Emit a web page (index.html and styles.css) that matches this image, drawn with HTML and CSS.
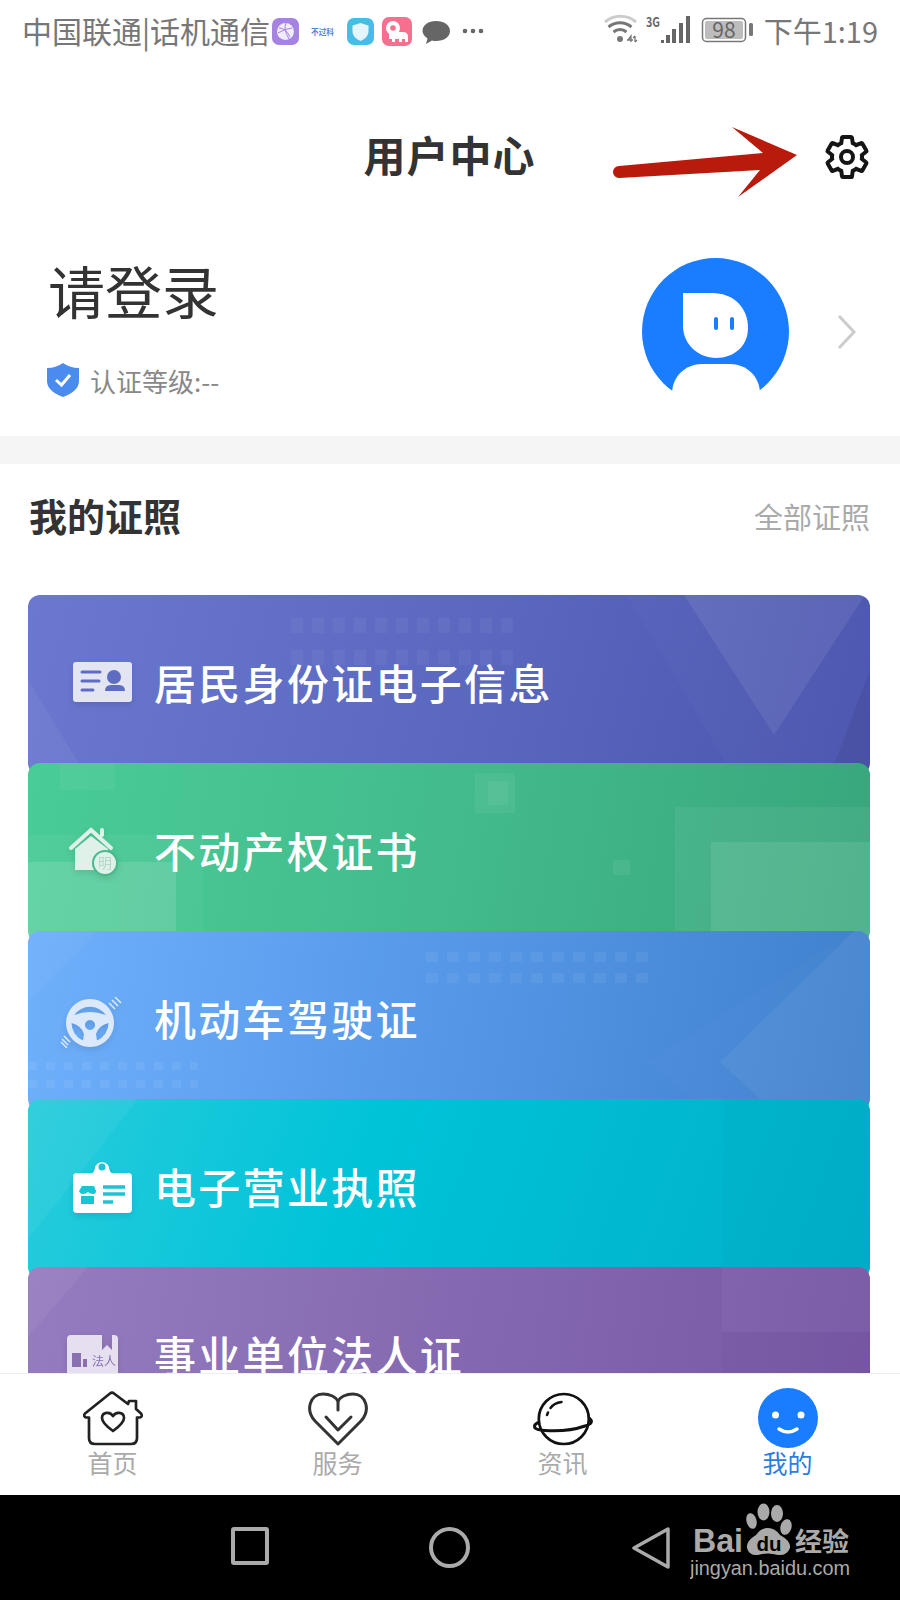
FILE: index.html
```html
<!DOCTYPE html>
<html lang="zh-CN">

<head>
  <meta charset="UTF-8">
  <meta name="viewport" content="width=device-width, initial-scale=1.0">
  <title>用户中心</title>
  <link rel="stylesheet" href="styles.css">
</head>

<body>
  <div class="page">

    <!-- 状态栏 -->
    <div class="status-bar">
      <span class="status-text">中国联通|话机通信</span>
      <svg class="status-notify" width="214" height="32" viewBox="0 0 214 32">
        <rect x="1" y="2" width="27" height="27" rx="7" fill="#a583e0"/>
        <circle cx="14.5" cy="15.5" r="8.5" fill="#f1ecfb"/>
        <path d="M8 12q7 0 11 9M15 7q-3 6 3 16M7 17q6-4 14-5" fill="none" stroke="#a583e0" stroke-width="1"/>
        <text class="tiny-text" x="40" y="18.5" textLength="23" lengthAdjust="spacingAndGlyphs">不过科</text>
        <rect x="76" y="2" width="27" height="27" rx="7" fill="#45bde6"/>
        <path d="M89.5 7l8 2.500v6q0 6-8 9.500q-8-3.500-8-9.500v-6z" fill="#e4f5fb"/>
        <rect x="111" y="1" width="30" height="29" rx="7" fill="#f5708f"/>
        <circle cx="122" cy="12" r="7" fill="#fff"/>
        <path d="M118 16H132Q137 16 137 21V26H134V23H131V26H128V23H124V26H121V23H118Z" fill="#fff"/>
        <circle cx="122" cy="12" r="2.800" fill="#f5708f"/>
        <path d="M165 5c8 0 14 4 14 10s-6 10-14 10c-1 0-3 0-4-.5l-6 3.500 1.500-5.500c-3-2-5-5-5-7.500 0-6 6-10 13.500-10z" fill="#666"/>
        <circle cx="194" cy="15" r="2.300" fill="#666"/>
        <circle cx="202" cy="15" r="2.300" fill="#666"/>
        <circle cx="210" cy="15" r="2.300" fill="#666"/>
      </svg>
      <div class="status-right">
        <svg width="150" height="32" viewBox="0 0 150 32">
          <path d="M1 8a24 24 0 0 1 31 0" fill="none" stroke="#ccc" stroke-width="3"/>
          <path d="M4.500 13a18 18 0 0 1 23 0" fill="none" stroke="#777" stroke-width="3"/>
          <path d="M9.500 18a10 10 0 0 1 13 0" fill="none" stroke="#777" stroke-width="3"/>
          <circle cx="16" cy="25" r="3" fill="#777"/>
          <path d="M24 26l3-4v6M23 26h6M31 22v6M33 26l-2 2M29 24l2-2" fill="none" stroke="#777" stroke-width="1.300"/>
          <text class="net-text" x="42" y="13" textLength="14" lengthAdjust="spacingAndGlyphs">3G</text>
          <rect x="57" y="26" width="3" height="3" fill="#666"/>
          <rect x="62" y="21" width="4" height="8" fill="#666"/>
          <rect x="68" y="15" width="4" height="14" fill="#666"/>
          <rect x="75" y="9" width="4" height="20" fill="#666"/>
          <rect x="82" y="2" width="4" height="27" fill="#666"/>
          <rect x="98.500" y="4.500" width="43" height="23" rx="4" fill="none" stroke="#777" stroke-width="1.500"/>
          <rect x="101" y="7" width="38" height="18" rx="2" fill="#bdbdbd"/>
          <text class="battery-text" x="120" y="24" text-anchor="middle">98</text>
          <rect x="145" y="9" width="4" height="13" rx="1.500" fill="#777"/>
        </svg>
        <span class="status-time">下午1:19</span>
      </div>
    </div>

    <!-- 标题 -->
    <div class="top-bar">
      <h1 class="top-title">用户中心</h1>
      <svg class="gear" width="48" height="48" viewBox="0 0 24 24">
        <path d="M19.430 12.980c.04-.32.07-.64.07-.98 0-.34-.03-.66-.07-.98l2.110-1.650c.19-.15.24-.42.12-.64l-2-3.460c-.12-.22-.39-.3-.61-.22l-2.490 1c-.52-.4-1.080-.73-1.690-.98l-.38-2.650C14.460 2.180 14.250 2 14 2h-4c-.25 0-.46.18-.49.42l-.38 2.650c-.61.25-1.170.59-1.690.98l-2.490-1c-.23-.09-.49 0-.61.22l-2 3.460c-.13.22-.07.49.12.64l2.110 1.650c-.04.32-.07.65-.07.98 0 .33.03.66.07.98l-2.110 1.650c-.19.15-.24.42-.12.64l2 3.460c.12.22.39.3.61.22l2.490-1c.52.4 1.080.73 1.690.98l.38 2.650c.03.24.24.42.49.42h4c.25 0 .46-.18.49-.42l.38-2.650c.61-.25 1.170-.59 1.690-.98l2.490 1c.23.09.49 0 .61-.22l2-3.460c.12-.22.07-.49-.12-.64l-2.110-1.650z" fill="none" stroke="#151515" stroke-width="2"/>
        <circle cx="12" cy="12" r="3" fill="none" stroke="#151515" stroke-width="2"/>
      </svg>
      <!-- 截图上的红色箭头标注 -->
      <svg class="mark-arrow" width="210" height="85" viewBox="0 0 210 85">
        <path d="M19 46L163 33L132 7L197 35L138 77L160 50L19 58A6 6 0 0 1 19 46Z" fill="#b81a0c"/>
      </svg>
    </div>

    <!-- 登录 -->
    <div class="login">
      <div class="login-info">
        <div class="login-title">请登录</div>
        <div class="login-level">
          <svg width="32" height="34" viewBox="0 0 32 34">
            <path d="M16 0q7 5 16 5v13q0 10-16 16Q0 28 0 18V5q9 0 16-5z" fill="#4a8bf0"/>
            <path d="M9 17l5.500 5L23 12" fill="none" stroke="#fff" stroke-width="3"/>
          </svg>
          <span>认证等级:--</span>
        </div>
      </div>
      <div class="login-side">
        <svg width="147" height="147" viewBox="0 0 147 147">
          <circle cx="73.500" cy="73.500" r="73.500" fill="#1a7cff"/>
          <path d="M30 147V136C30 118 44 106 60 106H88C104 106 118 118 118 136V147Z" fill="#fff"/>
          <path d="M41 35H70C92 35 106 50 106 70C106 88 92 100 74 100C56 100 41 86 41 68Z" fill="#fff"/>
          <rect x="72" y="59" width="4" height="13" rx="2" fill="#1a7cff"/>
          <rect x="88" y="59" width="4" height="13" rx="2" fill="#1a7cff"/>
        </svg>
        <svg width="20" height="36" viewBox="0 0 20 36">
          <path d="M2 2L17 18L2 34" fill="none" stroke="#ccc" stroke-width="3"/>
        </svg>
      </div>
    </div>

    <div class="split"></div>

    <!-- 我的证照 -->
    <div class="section-head">
      <h2 class="section-title">我的证照</h2>
      <span class="section-more">全部证照</span>
    </div>

    <div class="cards">

      <div class="card card-id">
        <svg class="card-decor" viewBox="0 0 842 180">
          <defs>
            <pattern id="dots1" width="21" height="32" patternUnits="userSpaceOnUse" x="263" y="23">
              <rect width="12" height="15" fill="#fff" opacity=".04"/>
            </pattern>
          </defs>
          <rect x="263" y="23" width="230" height="47" fill="url(#dots1)"/>
          <path d="M0 85L58 180H0Z" fill="#fff" opacity=".05"/>
          <path d="M598 0H842V180H705Z" fill="#fff" opacity=".02"/>
          <path d="M656 0H837L746 140Z" fill="#fff" opacity=".08"/>
          <path d="M842 75L802 180H842Z" fill="#000" opacity=".06"/>
        </svg>
        <div class="card-row">
          <svg width="70" height="60" viewBox="0 0 70 60">
            <rect x="11" y="8" width="59" height="40" rx="3" fill="#e3e5f3"/>
            <path d="M20 18H38M20 27H37M20 36H31" stroke="#5f6cc4" stroke-width="3" stroke-linecap="round"/>
            <circle cx="52" cy="23" r="7" fill="#5f6cc4"/>
            <path d="M43 37q0-6 6-6h8q6 0 6 6z" fill="#5f6cc4"/>
          </svg>
          <span class="card-name">居民身份证电子信息</span>
        </div>
      </div>

      <div class="card card-house">
        <svg class="card-decor" viewBox="0 0 842 180">
          <rect x="32" y="0" width="55" height="27" fill="#fff" opacity=".04"/>
          <rect x="0" y="72" width="175" height="108" fill="#fff" opacity=".04"/>
          <rect x="0" y="99" width="148" height="81" fill="#fff" opacity=".12"/>
          <rect x="447" y="10" width="40" height="40" fill="#fff" opacity=".06"/>
          <rect x="460" y="18" width="20" height="24" fill="#fff" opacity=".05"/>
          <rect x="585" y="97" width="17" height="15" fill="#fff" opacity=".06"/>
          <rect x="647" y="44" width="195" height="136" fill="#fff" opacity=".06"/>
          <rect x="683" y="79" width="159" height="101" fill="#fff" opacity=".09"/>
        </svg>
        <div class="card-row">
          <svg width="70" height="60" viewBox="0 0 70 60">
            <path d="M9 26L29 8L49 26M40 13V8" fill="none" stroke="#dff1e9" stroke-width="4" stroke-linecap="round"/>
            <path d="M13 27L29 14L46 27V48H13Z" fill="#dff1e9"/>
            <circle cx="43" cy="41" r="13" fill="#47b98c"/>
            <circle cx="43" cy="41" r="11" fill="#dff1e9"/>
            <text class="house-text" x="43" y="46" text-anchor="middle">明</text>
          </svg>
          <span class="card-name">不动产权证书</span>
        </div>
      </div>

      <div class="card card-car">
        <svg class="card-decor" viewBox="0 0 842 180">
          <defs>
            <pattern id="dots2" width="21" height="21" patternUnits="userSpaceOnUse" x="398" y="21">
              <rect width="12" height="10" fill="#fff" opacity=".05"/>
            </pattern>
            <pattern id="dots3" width="18" height="18" patternUnits="userSpaceOnUse" x="0" y="131">
              <rect width="9" height="8" fill="#fff" opacity=".06"/>
            </pattern>
          </defs>
          <rect x="398" y="21" width="228" height="31" fill="url(#dots2)"/>
          <rect x="0" y="131" width="170" height="26" fill="url(#dots3)"/>
          <path d="M0 0H70L0 70Z" fill="#fff" opacity=".04"/>
          <path d="M826 0L620 131L680 180H842V0Z" fill="#fff" opacity=".015"/>
          <path d="M826 0L692 131L745 180H842V0Z" fill="#fff" opacity=".05"/>
        </svg>
        <div class="card-row">
          <svg width="70" height="60" viewBox="0 0 70 60">
            <g fill="#dbe9fb">
              <path fill-rule="evenodd" d="M28 9a24 24 0 1 0 .01 0zM12.300 25A19 19 0 0 1 43.700 25Q28 19 12.300 25zM9.500 33Q20 36 22 44L21 50.500A19 19 0 0 1 9.500 33zM46.500 33Q36 36 34 44L35 50.500A19 19 0 0 0 46.500 33zM28 30a5 5 0 1 0 .01 0z"/>
            </g>
            <path d="M47 13L53 19M50 10L56 16M53 7L59 13M2 46L8 52M0 49L6 55M-1 52L5 58" fill="none" stroke="#dbe9fb" stroke-width="1.500"/>
          </svg>
          <span class="card-name">机动车驾驶证</span>
        </div>
      </div>

      <div class="card card-shop">
        <svg class="card-decor" viewBox="0 0 842 180">
          <path d="M0 0H110L0 140Z" fill="#fff" opacity=".05"/>
          <rect x="695" y="0" width="147" height="180" fill="#000" opacity=".012"/>
        </svg>
        <div class="card-row">
          <svg width="70" height="60" viewBox="0 0 70 60">
            <path d="M29 16Q33 14 33 9A7.500 7.500 0 0 1 47 9Q47 14 51 16Z" fill="#fff"/>
            <circle cx="40" cy="9" r="3.500" fill="#1cc3d5"/>
            <rect x="11" y="15" width="59" height="40" rx="4" fill="#fff"/>
            <path d="M20 28H32L34 33Q34 36 31 36T26 34Q24 36 21 36T17 33ZM19 38H32V46H19Z" fill="#1cc3d5"/>
            <path d="M41 29H63M41 36H63M41 44H51" stroke="#1cc3d5" stroke-width="3.500"/>
          </svg>
          <span class="card-name">电子营业执照</span>
        </div>
      </div>

      <div class="card card-legal">
        <svg class="card-decor" viewBox="0 0 842 180">
          <path d="M0 0H60L0 70Z" fill="#fff" opacity=".05"/>
          <rect x="694" y="0" width="148" height="65" fill="#fff" opacity=".035"/>
          <rect x="694" y="65" width="148" height="115" fill="#000" opacity=".015"/>
        </svg>
        <div class="card-row">
          <svg width="70" height="60" viewBox="0 0 70 60">
            <path d="M9 9H40V24L45 19L50 24V9H52Q56 9 56 13V60H5V13Q5 9 9 9Z" fill="#e5dff0"/>
            <path d="M10 41V27H19V41ZM21 41V33H25V41Z" fill="#8a70b0"/>
            <text class="legal-text" x="30" y="40" textLength="24" lengthAdjust="spacingAndGlyphs">法人</text>
          </svg>
          <span class="card-name">事业单位法人证</span>
        </div>
      </div>

    </div>

    <!-- 底部导航 -->
    <div class="tab-bar">
      <div class="tab">
        <svg width="60" height="60" viewBox="0 0 60 60">
          <path d="M27 5.500Q29 3.500 31 5.500L45 16L46 13H53V21L58 25.500Q60 28.500 57 29.500H54V50Q54 56 48 56H12Q6 56 6 50V29.500H3Q0 28.500 2 25.500Z" fill="none" stroke="#222" stroke-width="2.700" stroke-linejoin="round"/>
          <path d="M30 43C23 38 19 34 19 30C19 24 27 23 30 28C33 23 41 24 41 30C41 34 37 38 30 43Z" fill="none" stroke="#222" stroke-width="2.700" stroke-linejoin="round"/>
        </svg>
        <span>首页</span>
      </div>
      <div class="tab">
        <svg width="60" height="60" viewBox="0 0 60 60">
          <path d="M30 56L7 33C-3 22 2 6 15 6C22 6 28 9 30 13C32 9 38 6 45 6C58 6 63 22 53 33Z" fill="none" stroke="#333" stroke-width="3" stroke-linejoin="round"/>
          <path d="M30 13V22M18 29L30 42L43 29" fill="none" stroke="#333" stroke-width="3" stroke-linecap="round" stroke-linejoin="round"/>
        </svg>
        <span>服务</span>
      </div>
      <div class="tab">
        <svg width="60" height="60" viewBox="0 0 60 60">
          <circle cx="30.800" cy="31" r="25" fill="none" stroke="#111" stroke-width="2.700"/>
          <path d="M7 34Q0 36 2 40Q4 42 12 42.500Q35 44 52 38Q60 36 58 32Q57 30 55 30" fill="none" stroke="#111" stroke-width="3"/>
          <path d="M17.500 20Q21 15 28.500 14M14 27L15 24.500" fill="none" stroke="#111" stroke-width="2.500" stroke-linecap="round"/>
        </svg>
        <span>资讯</span>
      </div>
      <div class="tab tab-on">
        <svg width="60" height="60" viewBox="0 0 60 60">
          <circle cx="30" cy="30" r="30" fill="#1a7cff"/>
          <circle cx="17.500" cy="27" r="3.500" fill="#fff"/>
          <circle cx="43" cy="27" r="3.500" fill="#fff"/>
          <path d="M21 41Q30 47 39 41" fill="none" stroke="#fff" stroke-width="3.500" stroke-linecap="round"/>
        </svg>
        <span>我的</span>
      </div>
    </div>

    <!-- 系统导航 -->
    <div class="sys-bar">
      <span class="sys-square"></span>
      <span class="sys-circle"></span>
      <svg class="sys-back" width="38" height="42" viewBox="0 0 38 42">
        <path d="M36 2V40L2 21Z" fill="none" stroke="#aaa" stroke-width="3.500" stroke-linejoin="round"/>
      </svg>
      <!-- 水印 -->
      <svg class="watermark" width="166" height="85" viewBox="0 0 166 85">
        <text class="wm-bai" x="3" y="52" textLength="50" lengthAdjust="spacingAndGlyphs">Bai</text>
        <ellipse cx="61.500" cy="21" rx="5" ry="8" fill="#aaa" transform="rotate(-15 61.500 21)"/>
        <ellipse cx="73.500" cy="12" rx="6" ry="8.500" fill="#aaa"/>
        <ellipse cx="87" cy="13.500" rx="6" ry="8.500" fill="#aaa"/>
        <ellipse cx="96" cy="27" rx="5.500" ry="8" fill="#aaa" transform="rotate(15 96 27)"/>
        <path d="M78 28Q85 28 90 35Q101 41 100 48Q97 56 88 55Q78 52 68 55Q59 56 57 48Q56 41 66 35Q71 28 78 28Z" fill="#aaa"/>
        <text class="wm-du" x="79" y="51" text-anchor="middle" textLength="25" lengthAdjust="spacingAndGlyphs">du</text>
        <text class="wm-cn" x="105" y="51" textLength="54" lengthAdjust="spacingAndGlyphs">经验</text>
        <text class="wm-url" x="0" y="75" textLength="160" lengthAdjust="spacingAndGlyphs">jingyan.baidu.com</text>
      </svg>
    </div>

  </div>
</body>

</html>
```

FILE: styles.css
```css
* {
  padding: 0;
  margin: 0;
  box-sizing: border-box;
}

body {
  background-color: #fff;
  font-family: "Noto Sans CJK SC", "Noto Sans", sans-serif;
}

svg {
  display: block;
  flex: none;
}

.page {
  width: 900px;
  height: 1600px;
  display: flex;
  flex-direction: column;
  overflow: hidden;
}

/* 状态栏 */
.status-bar {
  height: 64px;
  padding: 0 22px;
  display: flex;
  align-items: center;
  color: #777;
  flex: none;
}

.status-text {
  font-size: 30px;
  line-height: 60px;
  margin-bottom: 4px;
  white-space: nowrap;
}

.status-notify {
  margin-left: 1px;
}

.status-right {
  margin-left: auto;
  margin-bottom: 4px;
  display: flex;
  align-items: center;
  gap: 10px;
}

.status-right svg {
  overflow: visible;
}

.status-time {
  font-size: 29px;
  line-height: 60px;
  white-space: nowrap;
}

.tiny-text {
  font-size: 8px;
  font-weight: 700;
  fill: #5a86d0;
}

.net-text {
  font-size: 13px;
  font-weight: 700;
  fill: #666;
}

.battery-text {
  font-size: 21px;
  fill: #666;
}

/* 标题 */
.top-bar {
  height: 186px;
  padding-right: 29px;
  display: grid;
  grid-template-columns: 1fr auto 1fr;
  align-items: center;
  position: relative;
  flex: none;
}

.top-title {
  grid-column: 2;
  font-size: 42px;
  font-weight: 700;
  letter-spacing: 1px;
  color: #333;
  margin: 0 0 8px 28px;
}

.gear {
  grid-column: 3;
  justify-self: end;
}

.mark-arrow {
  position: absolute;
  left: 600px;
  top: 56px;
}

/* 登录 */
.login {
  height: 186px;
  padding: 8px 43px 0 47px;
  display: flex;
  justify-content: space-between;
  align-items: flex-start;
  flex: none;
}

.login-title {
  font-size: 57px;
  line-height: 62px;
  color: #333;
  padding-left: 1px;
}

.login-level {
  margin-top: 42px;
  height: 36px;
  display: flex;
  align-items: center;
  gap: 11px;
  font-size: 26px;
  color: #888;
}

.login-side {
  display: flex;
  align-items: center;
  gap: 48px;
}

.split {
  height: 28px;
  background-color: #f5f5f5;
  flex: none;
}

/* 我的证照 */
.section-head {
  height: 108px;
  margin-bottom: 23px;
  padding: 0 30px 0 29px;
  display: flex;
  align-items: center;
  justify-content: space-between;
  flex: none;
}

.section-title {
  font-size: 38px;
  font-weight: 700;
  color: #333;
  margin-bottom: 8px;
}

.section-more {
  font-size: 29px;
  color: #aaa;
  margin-bottom: 4px;
}

.cards {
  flex: 1;
  min-height: 0;
  margin: 0 30px 0 28px;
  overflow: hidden;
}

.card {
  height: 180px;
  margin-bottom: -12px;
  border-radius: 12px;
  overflow: hidden;
  position: relative;
}

.card-id {
  background: linear-gradient(105deg, #6a78d0 0%, #5a67bf 55%, #4a54ae 100%);
}

.card-house {
  background: linear-gradient(100deg, #49cc96 0%, #43bb8c 50%, #38a67c 100%);
}

.card-car {
  background: linear-gradient(100deg, #6fb0fb 0%, #5a9cec 40%, #3f80cc 100%);
}

.card-shop {
  background: linear-gradient(110deg, #28ccdc 0%, #00c3d8 40%, #00afc8 100%);
}

.card-legal {
  background: linear-gradient(100deg, #957cc0 0%, #8469b0 50%, #7757a4 100%);
}

.card-decor {
  position: absolute;
  left: 0;
  top: 0;
  width: 100%;
  height: 100%;
}

.card-row {
  position: relative;
  padding: 59px 0 0 34px;
  display: flex;
  align-items: center;
  gap: 22px;
}

.card-row svg {
  filter: drop-shadow(0 3px 3px rgba(0, 0, 0, .1));
  overflow: visible;
}

.card-name {
  font-size: 42px;
  font-weight: 500;
  line-height: 56px;
  margin-bottom: 4px;
  letter-spacing: 2.3px;
  color: #fff;
  white-space: nowrap;
}

.house-text {
  font-size: 14px;
  fill: #b5d9c9;
}

.legal-text {
  font-size: 12px;
  fill: #8a70b0;
}

/* 底部导航 */
.tab-bar {
  height: 122px;
  padding-top: 14px;
  border-top: 1px solid #eee;
  display: grid;
  grid-template-columns: repeat(4, 1fr);
  background-color: #fff;
  flex: none;
}

.tab {
  display: flex;
  flex-direction: column;
  align-items: center;
  font-size: 25px;
  line-height: 28px;
  color: #aaa;
}

.tab-on {
  color: #2a7de1;
}

/* 系统导航 */
.sys-bar {
  height: 105px;
  padding-left: 231px;
  padding-top: 32px;
  background-color: #000;
  display: flex;
  align-items: flex-start;
  position: relative;
  flex: none;
}

.sys-square {
  width: 38px;
  height: 38px;
  border: 4px solid #aaa;
  border-radius: 3px;
}

.sys-circle {
  width: 41px;
  height: 41px;
  margin-left: 160px;
  border: 4px solid #aaa;
  border-radius: 50%;
}

.sys-back {
  margin-left: 162px;
}

.watermark {
  position: absolute;
  left: 690px;
  top: 5px;
}

.wm-bai {
  font-family: "Liberation Sans", sans-serif;
  font-size: 33px;
  font-weight: 700;
  fill: #aaa;
}

.wm-du {
  font-family: "Liberation Sans", sans-serif;
  font-size: 20px;
  font-weight: 700;
  fill: #000;
}

.wm-cn {
  font-size: 26px;
  font-weight: 700;
  fill: #aaa;
}

.wm-url {
  font-family: "Liberation Sans", sans-serif;
  font-size: 20px;
  fill: #aaa;
}
```
